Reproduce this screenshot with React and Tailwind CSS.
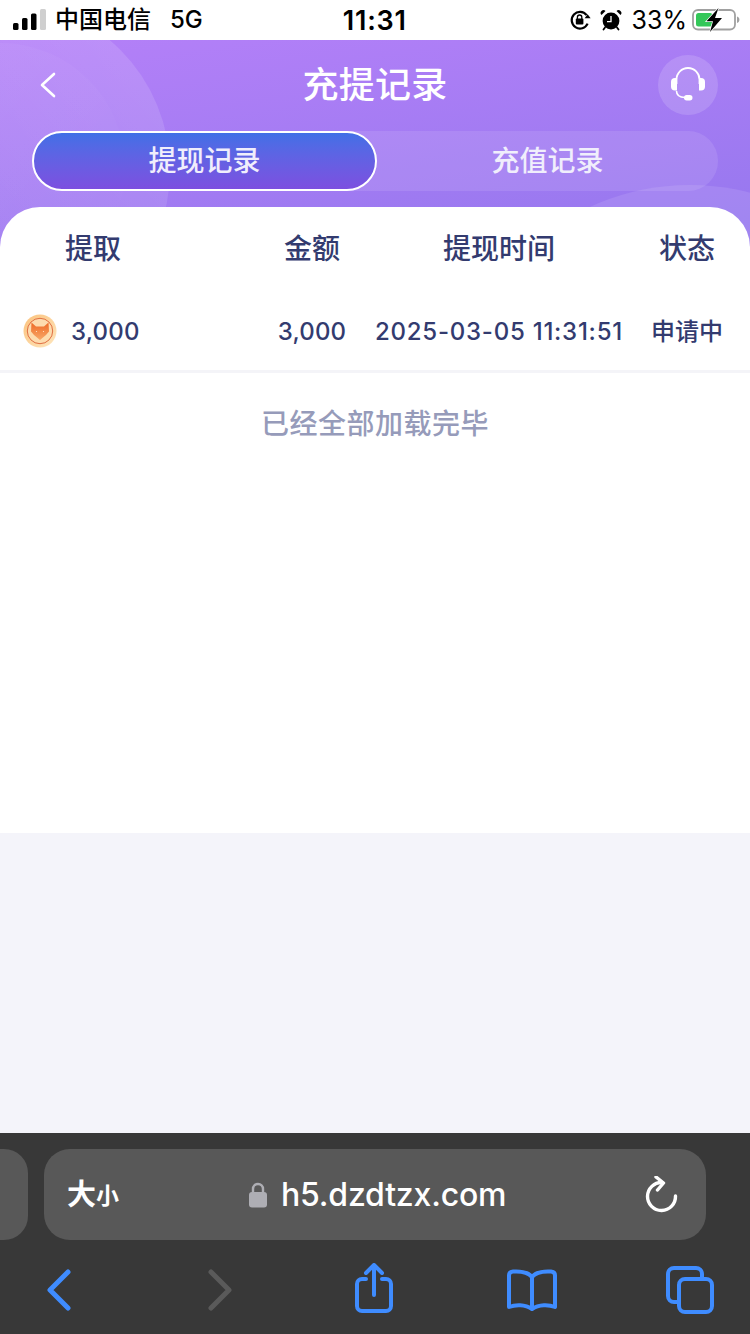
import React from 'react';

const FONT = "font-['Inter','Noto_Sans_CJK_SC',sans-serif]";

const SignalIcon = () => (
  <svg width="34" height="22" viewBox="0 0 34 22" className="block">
    <rect x="0" y="14" width="5.5" height="7" rx="1.5" fill="#000" />
    <rect x="9" y="9" width="5.5" height="12" rx="1.5" fill="#000" />
    <rect x="18" y="4.5" width="5.5" height="16.5" rx="1.5" fill="#000" />
    <rect x="27" y="0" width="6" height="21" rx="1.5" fill="#cfcfcf" />
  </svg>
);

const RotationLockIcon = () => (
  <svg width="22" height="22" viewBox="0 0 22 22" className="block">
    <path d="M17.6 6.2A8.3 8.3 0 1 0 18.6 14.6" fill="none" stroke="#000" strokeWidth="2.2" />
    <path d="M15.6 9.2h6l-3-4z" fill="#000" />
    <rect x="6.8" y="9.6" width="7.6" height="5.8" rx="1" fill="#000" />
    <path d="M8.4 10V8.2a2.2 2.2 0 0 1 4.4 0V10" fill="none" stroke="#000" strokeWidth="1.3" />
  </svg>
);

const AlarmIcon = () => (
  <svg width="22" height="22" viewBox="0 0 22 22" className="block">
    <circle cx="11" cy="12" r="8.4" fill="#000" />
    <path d="M1.5 6 5.5 2a2.8 2.800 0 0 0-4 4zM20.500 6l-4-4a2.800 2.800 0 0 1 4 4z" fill="#000" />
    <path d="M5 18.500 3.500 20.500M17 18.500l1.500 2" stroke="#000" strokeWidth="1.800" strokeLinecap="round" />
    <path d="M11 7V12.600H7" fill="none" stroke="#fff" strokeWidth="1.300" />
  </svg>
);

const BatteryIcon = () => (
  <svg width="48" height="24" viewBox="0 0 48 24" className="block">
    <rect x="1" y="2" width="42" height="19.500" rx="5" fill="none" stroke="#a0a0a0" strokeWidth="1.800" />
    <path d="M45 8.500c1.600.4 2.400 1.600 2.400 3.200s-.8 2.800-2.400 3.200z" fill="#a0a0a0" />
    <rect x="4" y="5" width="16.500" height="13.500" rx="2.500" fill="#34c759" />
    <path d="M26.500 0 14.500 13.300h6.500L18 24 30 10h-7z" fill="#000" stroke="#fff" strokeWidth="1.400" paintOrder="stroke" />
  </svg>
);

const HeadsetIcon = () => (
  <svg width="36" height="36" viewBox="0 0 36 36" className="block">
    <path d="M6.500 17v-4.500a11.500 11.500 0 0 1 23 0V17" fill="none" stroke="#fff" strokeWidth="1.800" />
    <path d="M7 11v12.500H5A4 4 0 0 1 1 19.500v-4.500A4 4 0 0 1 5 11z" fill="#fff" />
    <path d="M29 11v12.500h2a4 4 0 0 0 4-4v-4.500a4 4 0 0 0-4-4z" fill="#fff" />
    <path d="M6.500 24c0 4 3 6.300 8.500 6.500" fill="none" stroke="#fff" strokeWidth="1.600" />
    <rect x="14" y="28" width="8.500" height="5.500" rx="2.700" fill="#fff" />
  </svg>
);

const FoxCoin = () => (
  <svg width="34" height="34" viewBox="0 0 34 34" className="block shrink-0">
    <defs>
      <linearGradient id="coin" x1="0" y1="0" x2="1" y2="1">
        <stop offset="0" stopColor="#fbc27c" />
        <stop offset="1" stopColor="#fee6be" />
      </linearGradient>
      <linearGradient id="fox" x1="0" y1="0" x2="0" y2="1">
        <stop offset="0" stopColor="#ee6a26" />
        <stop offset="1" stopColor="#f8a868" />
      </linearGradient>
    </defs>
    <circle cx="17" cy="17" r="16.500" fill="url(#coin)" />
    <circle cx="17" cy="17" r="12.700" fill="#fddcae" stroke="#dd6136" strokeWidth="0.900" />
    <path d="M8.500 8.500 13 12.500h8l4.500-4 .5 9-3 3.500-6 5-6-5-3-3.500z" fill="url(#fox)" />
    <circle cx="13.500" cy="17.500" r="0.600" fill="#ffe9d0" />
    <circle cx="20.500" cy="17.500" r="0.600" fill="#ffe9d0" />
  </svg>
);

const ShareIcon = () => (
  <svg width="40" height="50" viewBox="0 0 40 50" className="block">
    <path d="M12 16H8a5 5 0 0 0-5 5v22a5 5 0 0 0 5 5h24a5 5 0 0 0 5-5V21a5 5 0 0 0-5-5h-4" fill="none" stroke="#3f8cff" strokeWidth="4" strokeLinecap="round" />
    <path d="M20 32V3M12 10l8-8 8 8" fill="none" stroke="#3f8cff" strokeWidth="4" strokeLinecap="round" strokeLinejoin="round" />
  </svg>
);

const BookIcon = () => (
  <svg width="50" height="42" viewBox="0 0 50 42" className="block">
    <path d="M25 8C21 3 14 2 6 2.500 3.500 2.700 2 4 2 6.500V38c6-2.500 16-3 23 2 7-5 17-4.500 23-2V6.500C48 4 46.500 2.700 44 2.500 36 2 29 3 25 8zM25 8v31" fill="none" stroke="#3f8cff" strokeWidth="4" strokeLinejoin="round" strokeLinecap="round" />
  </svg>
);

const TabsIcon = () => (
  <svg width="48" height="48" viewBox="0 0 48 48" className="block">
    <path d="M13 36H8a6 6 0 0 1-6-6V8a6 6 0 0 1 6-6h22a6 6 0 0 1 6 6v4" fill="none" stroke="#3f8cff" strokeWidth="4" strokeLinecap="round" />
    <rect x="13" y="13" width="33" height="33" rx="6" fill="none" stroke="#3f8cff" strokeWidth="4" />
  </svg>
);

const ReloadIcon = () => (
  <svg width="34" height="38" viewBox="0 0 34 38" className="block">
    <path d="M18 6.500A14 14 0 1 0 31.500 20" fill="none" stroke="#fff" strokeWidth="3.400" strokeLinecap="round" />
    <path d="M12 1l7.500 6-6 7" fill="none" stroke="#fff" strokeWidth="3.400" strokeLinecap="round" strokeLinejoin="round" />
  </svg>
);

const LockIcon = () => (
  <svg width="18" height="26" viewBox="0 0 18 26" className="block">
    <path d="M4 11V7a5 5 0 0 1 10 0v4" fill="none" stroke="#aeaeb4" strokeWidth="2.400" />
    <rect x="0" y="10" width="18" height="15.500" rx="3" fill="#aeaeb4" />
  </svg>
);

export default function App() {
  return (
    <div className={`${FONT} flex h-[1334px] w-[750px] flex-col overflow-hidden bg-[#f4f4fa]`}>
      {/* status bar */}
      <div className="flex h-10 shrink-0 items-center bg-white pl-[13px] pr-[10px] text-black">
        <SignalIcon />
        <span className="ml-[8px] text-[24px] font-medium leading-none">中国电信</span>
        <span className="ml-[19px] text-[24px] font-medium leading-none">5G</span>
        <span className="ml-[140px] text-[27px] font-semibold leading-none tracking-[0.8px]">11:31</span>
        <div className="ml-auto flex items-center">
          <RotationLockIcon />
          <span className="ml-[9px]"><AlarmIcon /></span>
          <span className="ml-[10px] text-[25px] leading-none">33%</span>
          <span className="ml-[5px]"><BatteryIcon /></span>
        </div>
      </div>

      {/* purple header */}
      <div className="relative h-[207px] shrink-0 overflow-hidden bg-[linear-gradient(172deg,#b480f8,#9477ee)]">
        <div className="absolute left-[-170px] top-[-40px] h-[340px] w-[340px] rounded-full bg-gradient-to-bl from-white/15 to-white/0" />
        <div className="absolute left-[-125px] top-[3px] h-[250px] w-[250px] rounded-full bg-gradient-to-br from-white/5 to-white/0" />
        <div className="absolute left-[452px] top-[145px] h-[476px] w-[476px] rounded-full bg-white/10" />

        <div className="relative flex h-[91px] items-center justify-between pb-[1px] pl-[36px] pr-[32px]">
          <svg width="24" height="30" viewBox="0 0 24 30" className="block">
            <path d="M18 4 6 15l12 11" fill="none" stroke="#fff" strokeWidth="2.600" strokeLinecap="round" strokeLinejoin="round" />
          </svg>
          <div className="absolute inset-x-0 text-center text-[36px] font-medium leading-none tracking-[0.3px] text-white">充提记录</div>
          <div className="flex h-[60px] w-[60px] items-center justify-center rounded-full bg-white/15">
            <HeadsetIcon />
          </div>
        </div>

        <div className="relative mx-[32px] flex h-[60px] rounded-full bg-white/10">
          <div className="flex h-[60px] w-[345px] items-center justify-center rounded-full border-2 border-white bg-gradient-to-b from-[#406fe6] to-[#7c4fe0] text-[28px] font-medium text-[#f0eefc]">
            提现记录
          </div>
          <div className="flex flex-1 items-center justify-center text-[28px] font-medium text-[#f0eefc]">
            充值记录
          </div>
        </div>
      </div>

      {/* records */}
      <div className="relative mt-[-40px] h-[626px] shrink-0 rounded-t-[40px] bg-white text-[#333b6f]">
        <div className="flex h-[84px] items-center text-[28px] font-medium">
          <div className="w-[250px]"><div className="w-[186px] text-center">提取</div></div>
          <div className="w-[124px] text-center">金额</div>
          <div className="w-[250px] text-center">提现时间</div>
          <div className="w-[126px] text-center">状态</div>
        </div>
        <div className="flex h-[82px] items-center border-b-[3px] border-[#f4f4f8] text-[24px] font-medium tracking-[0.2px]">
          <div className="flex w-[250px] items-center pl-[23px]">
            <FoxCoin />
            <span className="ml-[14px] pt-[3px]">3,000</span>
          </div>
          <div className="w-[124px] pt-[3px] text-center">3,000</div>
          <div className="w-[250px] pt-[3px] text-center tracking-[0.75px]">2025-03-05 11:31:51</div>
          <div className="w-[126px] pt-[3px] text-center tracking-normal">申请中</div>
        </div>
        <div className="mt-[31px] text-center text-[28px] font-medium leading-[40px] tracking-[0.5px] text-[#969bba]">已经全部加载完毕</div>
      </div>

      <div className="flex-1" />

      {/* safari bar */}
      <div className="h-[201px] shrink-0 bg-[#383838] pt-[16px]">
        <div className="flex h-[91px]">
          <div className="w-[28px] rounded-r-[24px] bg-[#585858]" />
          <div className="ml-[16px] flex w-[662px] items-center rounded-[26px] bg-[#585858] pl-[23px] pr-[28px] text-white">
            <span className="text-[29px] font-bold leading-none">大</span>
            <span className="mt-[4px] text-[23px] font-bold leading-none">小</span>
            <div className="ml-[130px]"><LockIcon /></div>
            <span className="ml-[14px] text-[32px] font-medium leading-none tracking-[-0.2px]">h5.dzdtzx.com</span>
            <div className="ml-auto"><ReloadIcon /></div>
          </div>
        </div>
        <div className="flex h-[100px] items-center pl-[46px]">
          <svg width="26" height="42" viewBox="0 0 26 42" className="block">
            <path d="M22 3 4 21l18 18" fill="none" stroke="#3f8cff" strokeWidth="5" strokeLinecap="round" strokeLinejoin="round" />
          </svg>
          <svg width="26" height="42" viewBox="0 0 26 42" className="ml-[135px] block">
            <path d="M4 3l18 18L4 39" fill="none" stroke="#5a5a5a" strokeWidth="5" strokeLinecap="round" strokeLinejoin="round" />
          </svg>
          <div className="ml-[121px] mt-[-4px]"><ShareIcon /></div>
          <div className="ml-[113px]"><BookIcon /></div>
          <div className="ml-[109px]"><TabsIcon /></div>
        </div>
      </div>
    </div>
  );
}
